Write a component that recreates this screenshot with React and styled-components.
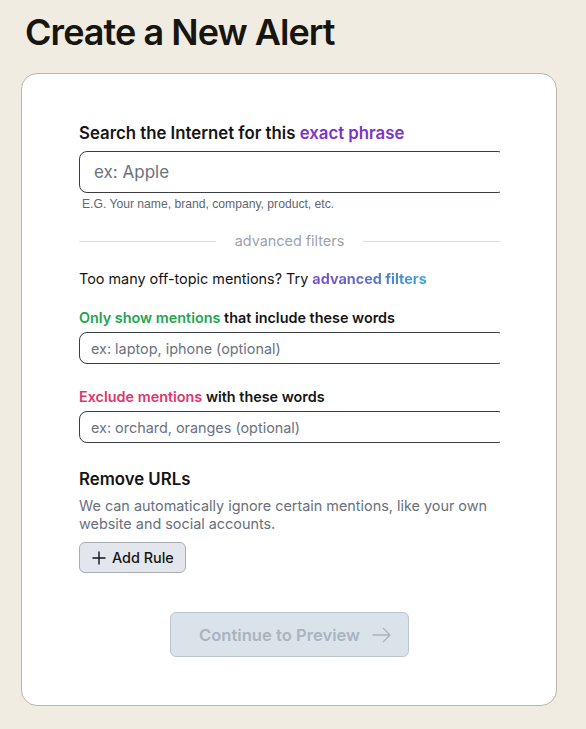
import React from "react";
import styled, { createGlobalStyle } from "styled-components";

const GlobalStyle = createGlobalStyle`
  html, body {
    margin: 0;
    padding: 0;
    background: #f1ece1;
  }
  body {
    font-family: Inter, "Noto Sans", sans-serif;
    color: #111111;
  }
`;

const Page = styled.div`
  padding: 10px 29px 24px 21px;
  min-height: 100vh;
  box-sizing: border-box;
`;

const Title = styled.h1`
  margin: 0 0 0 4px;
  font-size: 36px;
  line-height: 44px;
  font-weight: 600;
  letter-spacing: -0.95px;
  color: #161510;
`;

const Card = styled.div`
  margin-top: 19px;
  background: #fff;
  border: 1px solid #b9b6ac;
  border-radius: 16px;
  padding: 49px 57px 48px 57px;
`;

const Form = styled.div`
  width: 421px;
  overflow: hidden;
  display: flex;
  flex-direction: column;
`;

const Label = styled.div`
  font-size: ${(p) => (p.$big ? "16.8px" : "14.4px")};
  line-height: 20px;
  font-weight: 600;
  color: #151515;
  margin-top: ${(p) => p.$top || 0}px;
`;

const Accent = styled.span`
  color: ${(p) => p.$color};
`;

const Input = styled.input`
  box-sizing: border-box;
  width: calc(100% + 6px);
  height: ${(p) => (p.$big ? "42px" : "32px")};
  margin-top: ${(p) => (p.$big ? "8px" : "4px")};
  border: 1px solid #3a3d42;
  border-radius: 8px;
  padding: 0 ${(p) => (p.$big ? "14px" : "11px")};
  font-family: Inter, "Noto Sans", sans-serif;
  font-size: ${(p) => (p.$big ? "17px" : "14.4px")};
  color: #111;
  background: #fff;
  outline: none;

  &::placeholder {
    color: #6b7280;
  }
`;

const Hint = styled.div`
  margin: 4px 0 0 3px;
  font-family: "Liberation Sans", Arial, sans-serif;
  font-size: 12.15px;
  line-height: 14px;
  color: #5f6670;
`;

const Divider = styled.div`
  display: flex;
  align-items: center;
  gap: 19px;
  margin-top: 20px;
  font-size: 14.4px;
  line-height: 20px;
  color: #9ca3af;

  &::before,
  &::after {
    content: "";
    flex: 1;
    height: 1px;
    background: #dcdcdc;
  }
`;

const Text = styled.div`
  margin-top: 18px;
  font-size: 14.4px;
  line-height: 20px;
  color: #151515;
`;

const GradientLink = styled.span`
  font-weight: 700;
  background: linear-gradient(90deg, #7b4fc0 0%, #5a72c8 50%, #3aa6dd 100%);
  -webkit-background-clip: text;
  background-clip: text;
  color: transparent;
`;

const Desc = styled.p`
  margin: 8px 0 0;
  font-size: 14.4px;
  line-height: 18px;
  color: #68707c;
`;

const RuleButton = styled.button`
  align-self: flex-start;
  display: flex;
  align-items: center;
  gap: 6px;
  margin-top: 9px;
  height: 31px;
  padding: 0 11px 0 12px;
  background: #e3e7ed;
  border: 1px solid #a8adb5;
  border-radius: 6px;
  font-family: Inter, "Noto Sans", sans-serif;
  font-size: 14.4px;
  font-weight: 500;
  color: #151515;
  cursor: pointer;
`;

const Footer = styled.div`
  display: flex;
  justify-content: center;
  margin-top: 39px;
`;

const ContinueButton = styled.button`
  display: flex;
  align-items: center;
  justify-content: center;
  gap: 12px;
  height: 45px;
  width: 239px;
  padding: 0 0 0 12px;
  background: #dbe3ea;
  border: 1px solid #bcc4cc;
  border-radius: 6px;
  font-family: Inter, "Noto Sans", sans-serif;
  font-size: 16.6px;
  font-weight: 600;
  color: #a9b4bf;
  cursor: not-allowed;
`;

const PlusIcon = () => (
  <svg width="14" height="14" viewBox="0 0 14 14" fill="none">
    <path d="M7 1v12M1 7h12" stroke="#151515" strokeWidth="1.4" strokeLinecap="round" />
  </svg>
);

const ArrowIcon = () => (
  <svg width="20" height="16" viewBox="0 0 20 16" fill="none">
    <path
      d="M1 8h17M11.5 1.5L18 8l-6.5 6.5"
      stroke="#a9b4bf"
      strokeWidth="1.4"
      strokeLinecap="round"
      strokeLinejoin="round"
    />
  </svg>
);

const App = () => {
  return (
    <>
      <GlobalStyle />
      <Page>
        <Title>Create a New Alert</Title>
        <Card>
          <Form>
            <Label $big>
              Search the Internet for this <Accent $color="#7b35c9">exact phrase</Accent>
            </Label>
            <Input $big placeholder="ex: Apple" />
            <Hint>E.G. Your name, brand, company, product, etc.</Hint>

            <Divider>advanced filters</Divider>

            <Text>
              Too many off-topic mentions? Try <GradientLink>advanced filters</GradientLink>
            </Text>

            <Label $top={19}>
              <Accent $color="#21a552">Only show mentions</Accent> that include these words
            </Label>
            <Input placeholder="ex: laptop, iphone (optional)" />

            <Label $top={23}>
              <Accent $color="#e0356a">Exclude mentions</Accent> with these words
            </Label>
            <Input placeholder="ex: orchard, oranges (optional)" />

            <Label $big $top={26}>Remove URLs</Label>
            <Desc>
              We can automatically ignore certain mentions, like your own
              <br />
              website and social accounts.
            </Desc>
            <RuleButton>
              <PlusIcon />
              Add Rule
            </RuleButton>

            <Footer>
              <ContinueButton disabled>
                Continue to Preview
                <ArrowIcon />
              </ContinueButton>
            </Footer>
          </Form>
        </Card>
      </Page>
    </>
  );
};

export default App;
